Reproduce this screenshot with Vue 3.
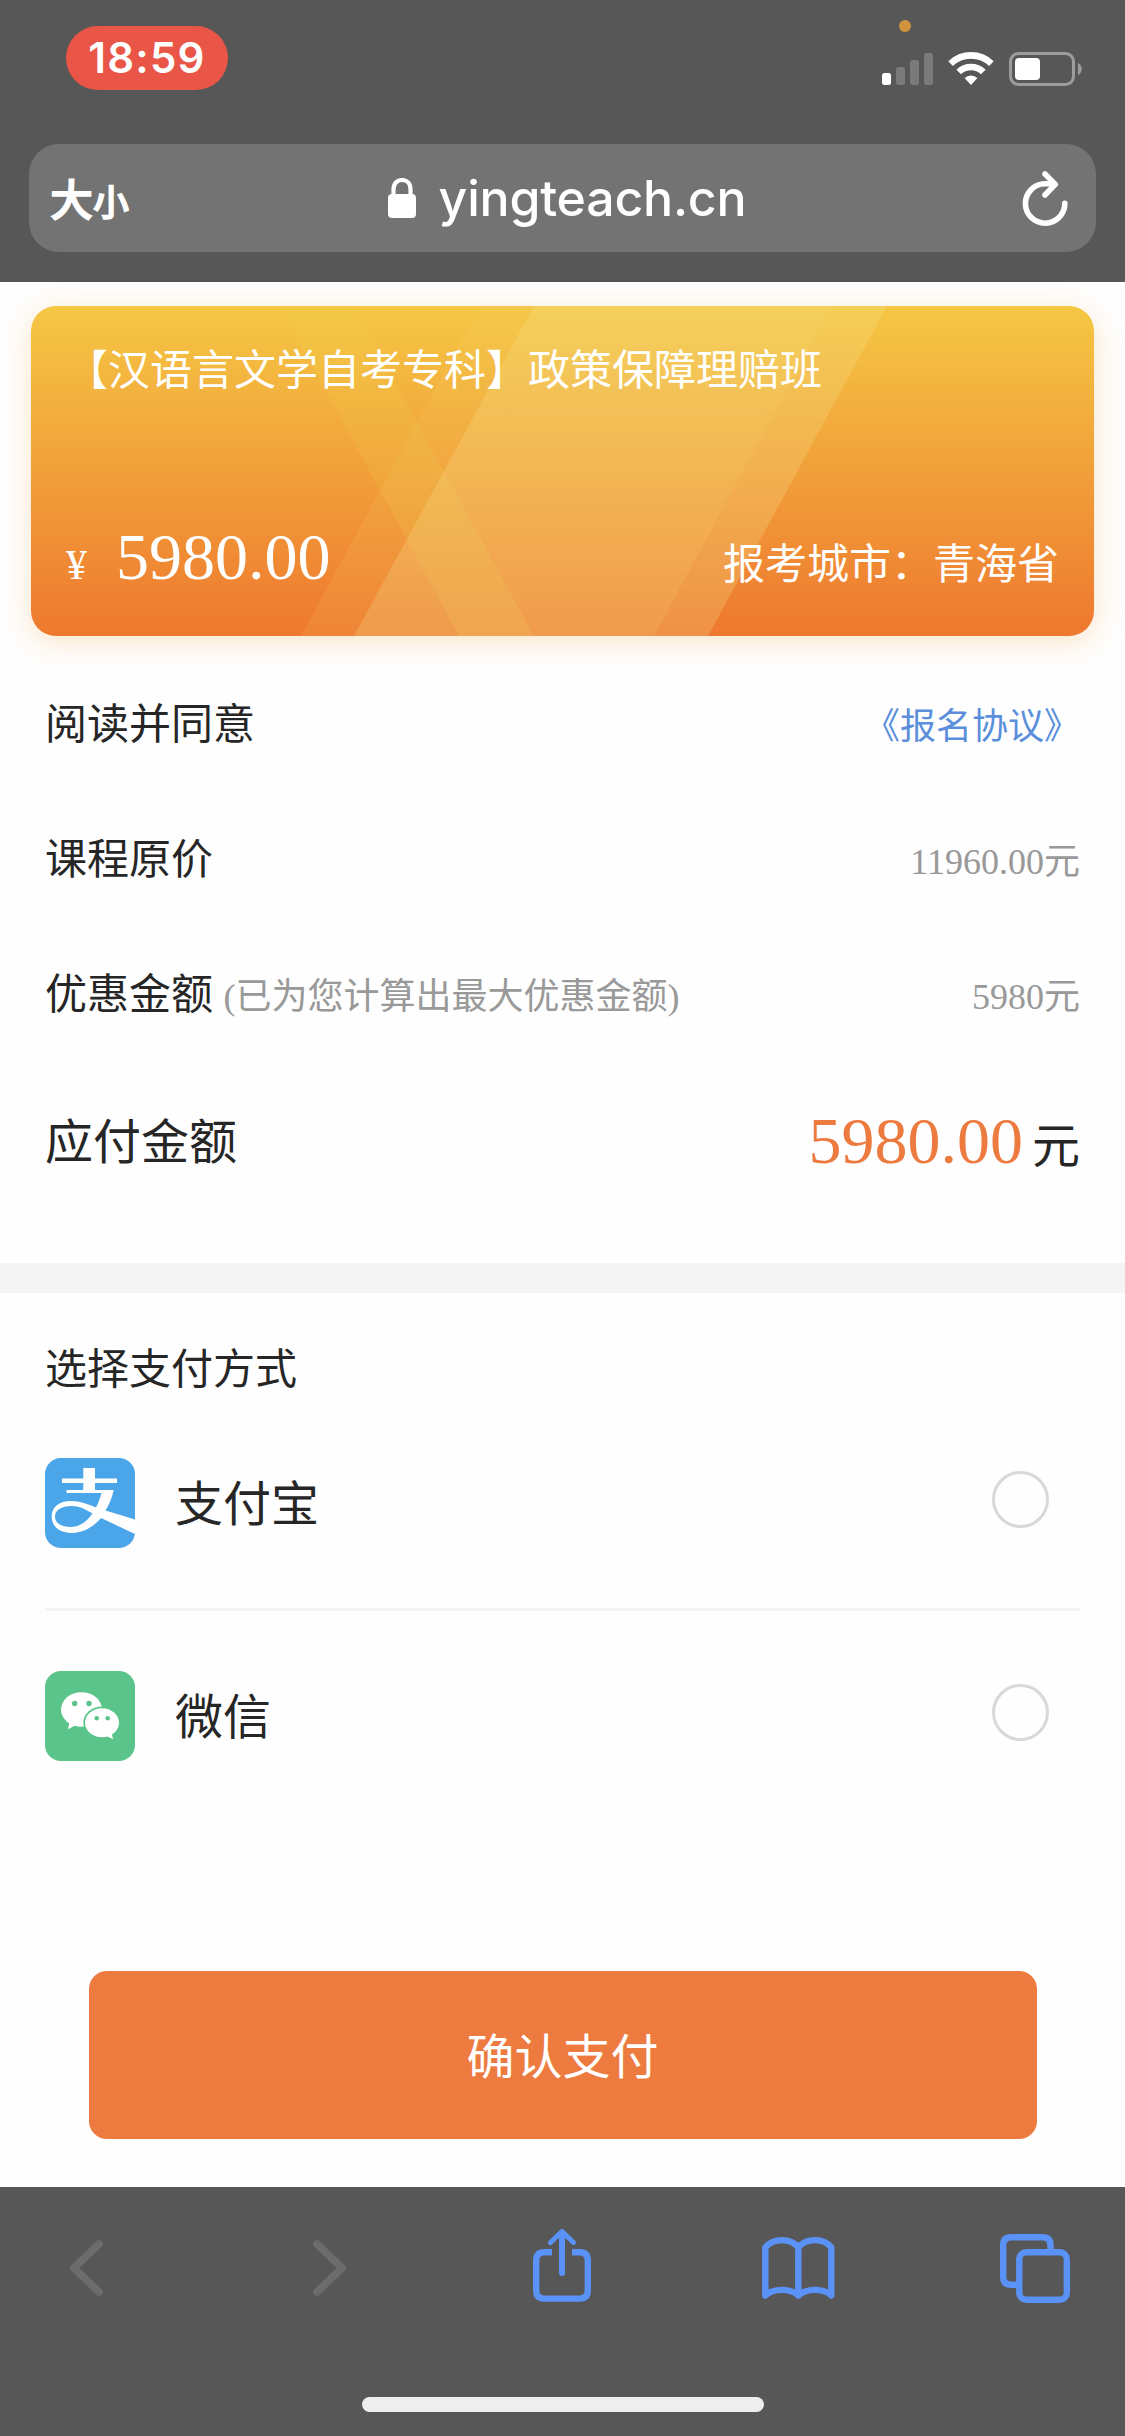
<script setup>
import { ref } from 'vue'

const course = ref({
  title: '【汉语言文学自考专科】政策保障理赔班',
  price: '5980.00',
  city: '青海省',
  original: '11960.00',
  discount: '5980'
})

const methods = ref([
  { id: 'alipay', name: '支付宝' },
  { id: 'wechat', name: '微信' }
])
const selected = ref('')

const select = (id) => {
  selected.value = id
}
</script>

<template>
  <div class="screen">
    <header class="top">
      <div class="status">
        <span class="time">18:59</span>
        <span class="mic-dot"></span>
        <svg class="status-icons" width="202" height="36" viewBox="0 0 202 36">
          <rect x="0" y="22" width="9" height="12" rx="2.5" fill="#fff" />
          <rect x="14" y="16" width="9" height="18" rx="2.5" fill="#7a7a7a" />
          <rect x="28" y="9" width="9" height="25" rx="2.5" fill="#7a7a7a" />
          <rect x="42" y="2" width="9" height="32" rx="2.5" fill="#7a7a7a" />
          <g fill="none" stroke="#fff" stroke-width="6.6">
            <path d="M68.6 12.6a29.5 29.5 0 0 1 40.8 0" />
            <path d="M76.7 21a17.6 17.6 0 0 1 24.6 0" />
          </g>
          <path d="M89 34l-6.4-6.9a9.2 9.2 0 0 1 12.8 0z" fill="#fff" />
          <rect x="128.5" y="2.5" width="63" height="31" rx="8" fill="none" stroke="#9c9c9c" stroke-width="3" />
          <rect x="133" y="7" width="25" height="22" rx="4" fill="#fff" />
          <path d="M196 12c5 2 5 10 0 12z" fill="#9c9c9c" />
        </svg>
      </div>

      <div class="url-bar">
        <div class="text-size"><span class="big">大</span><span class="small">小</span></div>
        <div class="address">
          <svg width="28" height="40" viewBox="0 0 28 40">
            <rect x="0" y="16" width="28" height="24" rx="4" fill="#fff" />
            <path d="M5.5 18v-6.5C5.5 5.5 9 2 14 2s8.5 3.5 8.5 9.5V18" fill="none" stroke="#fff" stroke-width="4.2" />
          </svg>
          <span class="domain">yingteach.cn</span>
        </div>
        <svg class="reload" width="46" height="56" viewBox="0 0 46 56">
          <g fill="none" stroke="#fff" stroke-width="5.6" stroke-linecap="round" stroke-linejoin="round">
            <path d="M42.8 33.2A19.7 19.7 0 1 1 23 13.8h8" />
            <path d="M23 4l10.3 10.4L23 25" />
          </g>
        </svg>
      </div>
    </header>

    <main class="content">
      <section class="card">
        <svg class="stripes" viewBox="0 0 1063 330" preserveAspectRatio="none">
          <path d="M249 0h73l181 330h-75z" fill="#ebd84c" opacity=".17" />
          <path d="M449 0h352L623 330H270z" fill="#f4dc70" opacity=".13" />
          <path d="M503 0h353L677 330H323z" fill="#f5e898" opacity=".23" />
        </svg>
        <div class="course-title">{{ course.title }}</div>
        <div class="card-bottom">
          <div class="card-price"><span class="yen">¥</span>{{ course.price }}</div>
          <div class="city">报考城市：{{ course.city }}</div>
        </div>
      </section>

      <section class="details">
        <div class="row">
          <span class="label">阅读并同意</span>
          <a class="link">《报名协议》</a>
        </div>
        <div class="row">
          <span class="label">课程原价</span>
          <span class="value">{{ course.original }}元</span>
        </div>
        <div class="row">
          <span class="label">优惠金额 <small>(已为您计算出最大优惠金额)</small></span>
          <span class="value">{{ course.discount }}元</span>
        </div>
        <div class="row total">
          <span class="label">应付金额</span>
          <span class="amount"><b>{{ course.price }}</b>元</span>
        </div>
      </section>

      <section class="payment">
        <div class="payment-title">选择支付方式</div>
        <div class="method" v-for="item in methods" :key="item.id" @click="select(item.id)">
          <svg v-if="item.id === 'alipay'" class="logo" viewBox="0 0 90 90">
            <rect width="90" height="90" fill="#4aa5e9" />
            <path d="M38.3 10H50v10.5h22V25H50v7h18.7C67 40 64 47 60.5 52.5L90 61.5V76L56 60C49 68 39 75 26.5 75 14 75 6.7 68 6.7 58.500 6.7 49 14 43 26 43c9 0 17 3 25 6.5C53.5 45 55 40 56.5 35h-35v-3h16.8v-7H17v-4.500h21.300zM27 48c-11 0-17 4.500-17 10.500C10 65 16 69 26 69c9 0 16-6 21.500-13.500C40 51 34 48 27 48z" fill="#fff" fill-rule="evenodd" />
          </svg>
          <svg v-else class="logo" viewBox="0 0 90 90">
            <rect width="90" height="90" fill="#5ac48b" />
            <ellipse cx="36.5" cy="38.5" rx="20.5" ry="17.3" fill="#fff" />
            <path d="M24.5 51L23 58.3l7.5-4z" fill="#fff" />
            <ellipse cx="57" cy="51.7" rx="18.7" ry="16.2" fill="#5ac48b" />
            <ellipse cx="57" cy="51.7" rx="17" ry="14.5" fill="#fff" />
            <path d="M61.5 65l6.5 3.2-1.3-6.2z" fill="#fff" />
            <g fill="#5ac48b">
              <circle cx="29.7" cy="32.5" r="2.7" />
              <circle cx="44" cy="32.5" r="2.7" />
              <circle cx="51.7" cy="47.2" r="2.3" />
              <circle cx="62.7" cy="47.2" r="2.3" />
            </g>
          </svg>
          <span class="method-name">{{ item.name }}</span>
          <span class="radio" :class="{ checked: selected === item.id }"></span>
        </div>
      </section>

      <button class="confirm">确认支付</button>
    </main>

    <footer class="toolbar">
      <div class="tools">
        <svg viewBox="0 0 80 80" class="dim">
          <path d="M52 16L27 40l25 24" />
        </svg>
        <svg viewBox="0 0 80 80" class="dim">
          <path d="M33 16l25 24-25 24" />
        </svg>
        <svg viewBox="0 0 80 80">
          <path d="M31 24.3h-7.5q-8.3 0-8.3 8.3v30q0 8 8 8h35.6q8 0 8-8v-30q0-8.3-8.3-8.3H51" stroke-linecap="butt" />
          <path d="M41 45V6" stroke-width="6" />
          <path d="M29.5 14.5L41 3.5l11.5 11" stroke-width="5" />
        </svg>
        <svg viewBox="0 0 80 80">
          <path d="M40.3 67.5v-48C33 9.7 15 9.7 7.3 19.5v48C15 60 33 60 40.3 67.5 48 60 66 60 73.3 67.5v-48C66 9.7 48 9.7 40.3 19.5" />
        </svg>
        <svg viewBox="0 0 80 80">
          <path d="M22 56.8h-5.800q-8 0-8-8V17.200q0-8 8-8h31.300q8 0 8 8V23" stroke-linecap="butt" />
          <rect x="24.3" y="24.3" width="47.5" height="47.5" rx="7" />
        </svg>
      </div>
      <div class="home-bar"></div>
    </footer>
  </div>
</template>

<style>
body {
  margin: 0;
  background: #fefefe;
}
</style>

<style scoped>
.screen {
  width: 1125px;
  height: 2436px;
  display: flex;
  flex-direction: column;
  overflow: hidden;
  background: #fefefe;
  color: #262626;
  font-family: "Liberation Serif", "Noto Sans CJK SC", serif;
}

.top {
  height: 282px;
  flex: none;
  background: #575757;
}

.status {
  position: relative;
  height: 144px;
  display: flex;
  justify-content: space-between;
  align-items: flex-start;
  box-sizing: border-box;
  padding: 26px 41px 0 66px;
}

.time {
  width: 162px;
  height: 64px;
  line-height: 64px;
  border-radius: 32px;
  background: #e95546;
  color: #fff;
  text-align: center;
  font-family: Inter, sans-serif;
  font-weight: 600;
  font-size: 42px;
  letter-spacing: 1.2px;
}

.mic-dot {
  position: absolute;
  left: 899px;
  top: 20px;
  width: 12px;
  height: 12px;
  border-radius: 50%;
  background: #d0953c;
}

.status-icons {
  margin-top: 25px;
}

.url-bar {
  margin: 0 29px;
  height: 108px;
  display: flex;
  justify-content: space-between;
  align-items: center;
  box-sizing: border-box;
  padding: 0 28px 0 21px;
  border-radius: 30px;
  background: #737373;
  color: #fff;
}

.text-size {
  width: 79px;
  display: flex;
  align-items: baseline;
  font-family: "Noto Sans CJK SC", sans-serif;
  font-weight: 500;
  line-height: 60px;
  -webkit-text-stroke: 1.4px #fff;
}

.big {
  font-size: 43px;
}

.small {
  font-size: 36px;
}

.address {
  display: flex;
  align-items: center;
  gap: 23px;
  margin-right: 17px;
}

.domain {
  font-family: Inter, sans-serif;
  font-weight: 500;
  font-size: 50px;
  line-height: 60px;
  letter-spacing: -0.2px;
}

.content {
  height: 1905px;
  flex: none;
  box-sizing: border-box;
  padding-top: 24px;
}

.card {
  position: relative;
  margin: 0 31px;
  height: 330px;
  display: flex;
  flex-direction: column;
  justify-content: space-between;
  box-sizing: border-box;
  padding: 35px 35px 38px 35px;
  border-radius: 25px;
  background: linear-gradient(#f5c744, #ee782f);
  box-shadow: 0 6px 30px rgba(245, 170, 70, 0.3);
  color: #fff;
}

.stripes {
  position: absolute;
  left: 0;
  top: 0;
  width: 100%;
  height: 100%;
}

.course-title,
.card-bottom {
  position: relative;
}

.course-title {
  font-size: 42px;
  line-height: 60px;
}

.card-bottom {
  display: flex;
  justify-content: space-between;
  align-items: baseline;
  line-height: 66px;
}

.card-price {
  font-size: 66px;
}

.yen {
  margin-right: 29px;
  font-size: 42px;
}

.city {
  font-size: 42px;
}

.details {
  height: 608px;
  padding: 19px 45px 0;
  border-bottom: 30px solid #f4f4f4;
}

.row {
  height: 135px;
  display: flex;
  justify-content: space-between;
  align-items: center;
}

.label {
  padding-bottom: 5px;
  font-size: 42px;
}

.label small {
  font-size: 36px;
  color: #999;
}

.link,
.value {
  font-size: 36px;
}

.link {
  color: #5b8fdb;
}

.value {
  color: #999;
}

.total {
  height: 162px;
}

.total .label,
.amount {
  font-size: 48px;
}

.total .label {
  padding-bottom: 7px;
}

.amount b {
  margin-right: 9px;
  font-size: 66px;
  font-weight: normal;
  color: #ed7b40;
}

.payment {
  padding: 0 45px;
}

.payment-title {
  height: 102px;
  padding-top: 47px;
  box-sizing: border-box;
  font-size: 42px;
  line-height: 60px;
}

.method {
  height: 213px;
  display: flex;
  align-items: center;
  box-sizing: border-box;
  border-top: 3px solid transparent;
}

.method + .method {
  border-top-color: #f3f3f3;
}

.logo {
  width: 90px;
  height: 90px;
  flex: none;
  border-radius: 16px;
}

.method-name {
  flex: 1;
  margin-left: 40px;
  padding-bottom: 6px;
  font-size: 48px;
}

.radio {
  width: 57px;
  height: 57px;
  margin: 0 31px 8px 0;
  box-sizing: border-box;
  border: 3px solid #d8d8d8;
  border-radius: 50%;
}

.radio.checked {
  border: 16px solid #ed7b40;
}

.confirm {
  display: block;
  width: 948px;
  height: 168px;
  margin: 150px 0 0 89px;
  padding: 0 1px 5px 0;
  border: none;
  border-radius: 18px;
  background: #ed7a3e;
  color: #fff;
  font-family: inherit;
  font-size: 48px;
}

.toolbar {
  flex: 1;
  background: #575757;
}

.tools {
  height: 210px;
  display: flex;
  justify-content: space-between;
  align-items: flex-start;
  box-sizing: border-box;
  padding: 41px 50px 0 47px;
}

.tools svg {
  width: 80px;
  height: 80px;
  fill: none;
  stroke: #5b92f8;
  stroke-width: 6.4;
  stroke-linecap: round;
  stroke-linejoin: round;
}

.tools .dim {
  stroke: #6c6c6c;
  stroke-width: 7.6;
}

.home-bar {
  width: 402px;
  height: 15px;
  margin-left: 362px;
  border-radius: 8px;
  background: #eee;
}
</style>
